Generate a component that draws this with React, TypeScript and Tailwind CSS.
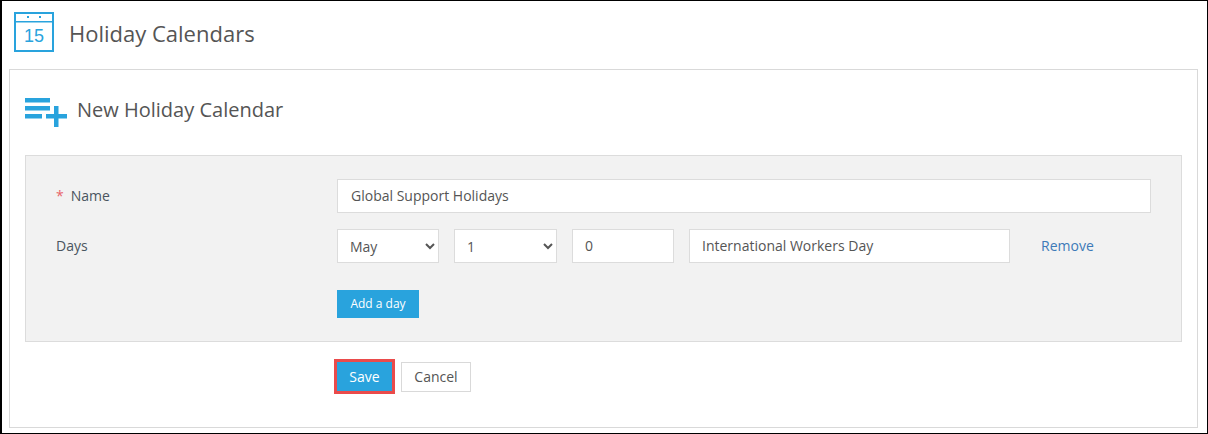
import React from 'react';

const fieldClass =
  'h-[34px] border border-[#dcdcdc] bg-white text-[14px] text-[#555555] outline-none';

const CalendarIcon = () => (
  <svg width="40" height="40" viewBox="0 0 40 40" className="shrink-0">
    <rect x="1" y="1" width="38" height="38" fill="none" stroke="#29a3dd" strokeWidth="2" />
    <rect x="1" y="9" width="38" height="1.5" fill="#29a3dd" />
    <rect x="13" y="4" width="2" height="2" fill="#29a3dd" />
    <rect x="25" y="4" width="2" height="2" fill="#29a3dd" />
    <text
      x="20"
      y="30"
      textAnchor="middle"
      fontSize="18"
      fill="#29a3dd"
      fontFamily="'Liberation Sans', sans-serif"
    >
      15
    </text>
  </svg>
);

const AddListIcon = () => (
  <svg width="42" height="29" viewBox="0 0 42 29" className="shrink-0">
    <rect x="0" y="0" width="25" height="4.5" fill="#29a3dd" />
    <rect x="0" y="8" width="25" height="4.5" fill="#29a3dd" />
    <rect x="0" y="16" width="17" height="4.5" fill="#29a3dd" />
    <rect x="21" y="16" width="21" height="4.5" fill="#29a3dd" />
    <rect x="29" y="8" width="4.5" height="21" fill="#29a3dd" />
  </svg>
);

export default function App() {
  return (
    <div className="w-[1208px] h-[434px] overflow-hidden border-y border-r border-l-2 border-black bg-white font-['Open_Sans',sans-serif] text-[14px] text-[#555555]">
      <div className="flex h-[68px] items-start pl-[12px] pt-[11px]">
        <CalendarIcon />
        <h1 className="ml-[15px] text-[22px] leading-[42px] font-normal text-[#555555]">Holiday Calendars</h1>
      </div>

      <div className="ml-[7px] mr-[9px] h-[359px] border border-[#d9d9d9] px-[15px]">
        <div className="flex h-[85px] items-start pt-[28px]">
          <AddListIcon />
          <h2 className="ml-[10px] -mt-[3px] text-[20px] font-normal text-[#555555]">New Holiday Calendar</h2>
        </div>

        <div className="h-[187px] border border-[#dcdcdc] bg-[#f2f2f2] pt-[23px] pl-[30px]">
          <div className="flex h-[34px] items-center">
            <label className="w-[281px] pb-[2px] text-[#4a5560]">
              <span className="mr-[7px] text-[#e8636a]">*</span>Name
            </label>
            <input
              readOnly
              value="Global Support Holidays"
              className={`${fieldClass} w-[814px] px-[13px] pb-[2px]`}
            />
          </div>

          <div className="mt-[16px] flex h-[34px] items-center">
            <label className="w-[281px] pb-[2px] text-[#4a5560]">Days</label>
            <select defaultValue="May" className={`${fieldClass} w-[102px] pl-[8px]`}>
              <option>April</option>
              <option>May</option>
              <option>June</option>
            </select>
            <select defaultValue="1" className={`${fieldClass} ml-[15px] w-[103px] pl-[8px]`}>
              <option>1</option>
              <option>2</option>
              <option>3</option>
            </select>
            <input readOnly value="0" className={`${fieldClass} ml-[15px] w-[102px] px-[12px] pb-[2px]`} />
            <input
              readOnly
              value="International Workers Day"
              className={`${fieldClass} ml-[15px] w-[321px] px-[12px] pb-[2px]`}
            />
            <a className="ml-[31px] pb-[2px] text-[#3d7ab8]">Remove</a>
          </div>

          <div className="mt-[27px] pl-[281px]">
            <button className="h-[28px] w-[82px] bg-[#29a3dd] text-[12px] font-medium text-white">
              Add a day
            </button>
          </div>
        </div>

        <div className="mt-[17px] flex items-center pl-[309px]">
          <button className="h-[35px] w-[61px] border-[3px] border-[#ea4b4b] bg-[#29a3dd] text-white">
            Save
          </button>
          <button className="ml-[6px] h-[30px] w-[70px] border border-[#d9d9d9] bg-white text-[#555555]">
            Cancel
          </button>
        </div>
      </div>
    </div>
  );
}
